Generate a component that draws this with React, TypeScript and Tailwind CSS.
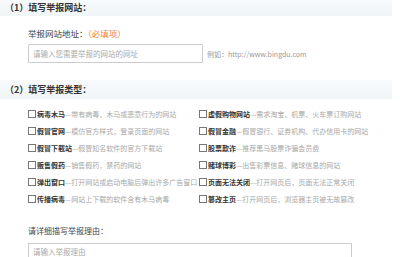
import React from "react";

const rows: [string, string, string, string][] = [
  ["病毒木马", "带有病毒，木马或恶意行为的网站", "虚假购物网站", "需求淘宝、机票、火车票订购网站"],
  ["假冒官网", "模仿官方样式，登录页面的网站", "假冒金融", "假冒银行、证券机构、代办信用卡的网站"],
  ["假冒下载站", "假冒知名软件的官方下载站", "股票欺诈", "推荐黑马股票诈骗会员费"],
  ["贩售假药", "销售假药，禁药的网站", "赌球博彩", "出售彩票信息、赌球信息的网站"],
  ["弹出窗口", "打开网站或启动电脑后弹出许多广告窗口", "页面无法关闭", "打开网页后，页面无法正常关闭"],
  ["传播病毒", "网站上下载的软件含有木马病毒", "篡改主页", "打开网页后，浏览器主页被无故篡改"],
];

function Item({ name, desc }: { name: string; desc: string }) {
  return (
    <div className="flex items-center h-[17px] whitespace-nowrap">
      <span className="w-[8px] h-[8px] border border-[#777] bg-white mr-[1px] shrink-0" />
      <span className="text-[#333] font-bold">{name}</span>
      <span className="text-[#a8a8a8]">—{desc}</span>
    </div>
  );
}

export default function App() {
  return (
    <div
      className="w-[400px] h-[257px] overflow-hidden bg-white text-[7.5px] leading-[10px]"
      style={{ fontFamily: '"Noto Sans CJK SC", "Noto Sans", sans-serif' }}
    >
      <div className="w-[392px] h-[16px] bg-gradient-to-b from-[#f8fafc] to-[#f0f5f8] flex items-center pl-[5px] text-[9px] font-bold text-[#333]">
        （1）填写举报网站：
      </div>
      <div className="pl-[28px] mt-[12px] text-[8.5px] text-[#444]">
        举报网站地址：<span className="text-[#f7862f]">（必填项）</span>
      </div>
      <div className="flex items-center pl-[28px] mt-[6px]">
        <div className="w-[175px] h-[19px] border border-[#ccc] rounded-[1px] flex items-center pl-[4px] text-[#aaa]">
          请输入您需要举报的网站的网址
        </div>
        <div className="ml-[4px] text-[#999] text-[7px]">例如：http://www.bingdu.com</div>
      </div>
      <div className="w-[392px] h-[19px] mt-[17px] bg-gradient-to-b from-[#f8fafc] to-[#f0f5f8] flex items-center pl-[5px] text-[9px] font-bold text-[#333]">
        （2）填写举报类型：
      </div>
      <div className="grid grid-cols-[171px_1fr] pl-[28px] mt-[6px] text-[7px]">
        {rows.map((r, i) => (
          <React.Fragment key={i}>
            <Item name={r[0]} desc={r[1]} />
            <Item name={r[2]} desc={r[3]} />
          </React.Fragment>
        ))}
      </div>
      <div className="pl-[28px] mt-[19px] text-[8px] text-[#444]">请详细描写举报理由：</div>
      <div className="ml-[28px] mt-[7px] w-[324px] h-[30px] border border-[#ccc] pl-[4px] pt-[3px] text-[#aaa]">
        请输入举报理由
      </div>
    </div>
  );
}
